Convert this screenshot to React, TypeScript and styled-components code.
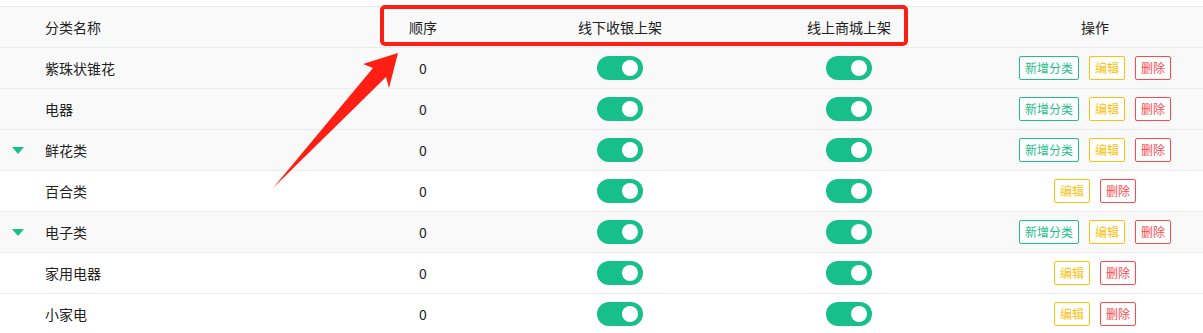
import styled, { createGlobalStyle } from "styled-components";

const GlobalStyle = createGlobalStyle`
  html, body {
    margin: 0;
    padding: 0;
    background: #fff;
  }
  body {
    font-family: "Noto Sans CJK SC", "Noto Sans", "Liberation Sans", sans-serif;
    font-size: 14px;
    color: #222;
  }
`;

const COLUMNS = "317px 212px 182px 276px 1fr";
const GREEN = "#17bf8b";

interface ICategory {
  id: number;
  name: string;
  sort: number;
  offline: boolean;
  online: boolean;
  level: 1 | 2;
  hasChildren?: boolean;
}

const categories: ICategory[] = [
  { id: 1, name: "紫珠状锥花", sort: 0, offline: true, online: true, level: 1 },
  { id: 2, name: "电器", sort: 0, offline: true, online: true, level: 1 },
  { id: 3, name: "鲜花类", sort: 0, offline: true, online: true, level: 1, hasChildren: true },
  { id: 4, name: "百合类", sort: 0, offline: true, online: true, level: 2 },
  { id: 5, name: "电子类", sort: 0, offline: true, online: true, level: 1, hasChildren: true },
  { id: 6, name: "家用电器", sort: 0, offline: true, online: true, level: 2 },
  { id: 7, name: "小家电", sort: 0, offline: true, online: true, level: 2 },
];

const Page = styled.div`
  position: relative;
  padding-top: 6px;
  height: 333px;
  overflow: hidden;
  box-sizing: border-box;
`;

const Table = styled.div`
  display: flex;
  flex-direction: column;
`;

const HeaderRow = styled.div`
  display: grid;
  grid-template-columns: ${COLUMNS};
  height: 40px;
  background: #f9f9f9;
  border-top: 1px solid #e9ebef;
  border-bottom: 1px solid #e9ebef;
`;

const Row = styled.div<{ $child?: boolean }>`
  display: grid;
  grid-template-columns: ${COLUMNS};
  height: 40px;
  background: ${(p) => (p.$child ? "#fff" : "#f9f9f9")};
  border-bottom: 1px solid #e9ebef;
`;

const Cell = styled.div<{ $left?: boolean }>`
  display: flex;
  align-items: center;
  justify-content: ${(p) => (p.$left ? "flex-start" : "center")};
  padding-left: ${(p) => (p.$left ? "12px" : "0")};
  gap: 10px;
  white-space: nowrap;
`;

const ExpandSlot = styled.span`
  display: inline-flex;
  align-items: center;
  width: 23px;
  height: 10px;
`;

const Caret = styled.span`
  width: 0;
  height: 0;
  border-left: 6.5px solid transparent;
  border-right: 6.5px solid transparent;
  border-top: 7px solid ${GREEN};
`;

const Switch = styled.span<{ $on: boolean }>`
  position: relative;
  display: inline-block;
  width: 46px;
  height: 24px;
  border-radius: 12px;
  background: ${(p) => (p.$on ? GREEN : "#dcdfe6")};
  &::after {
    content: "";
    position: absolute;
    top: 4px;
    ${(p) => (p.$on ? "right: 5px;" : "left: 5px;")}
    width: 16px;
    height: 16px;
    border-radius: 50%;
    background: #fff;
  }
`;

const ActionButton = styled.button<{ $color: string }>`
  height: 24px;
  padding: 0 5px;
  border: 1px solid ${(p) => p.$color};
  border-radius: 2px;
  background: #fff;
  color: ${(p) => p.$color};
  font-family: inherit;
  font-size: 12px;
  line-height: 22px;
  cursor: pointer;
`;

const Highlight = styled.div`
  position: absolute;
  left: 380px;
  top: 5px;
  width: 528px;
  height: 41px;
  box-sizing: border-box;
  border: 4px solid #fe1f14;
  border-radius: 5px;
  pointer-events: none;
`;

const ArrowLayer = styled.svg`
  position: absolute;
  left: 0;
  top: 0;
  pointer-events: none;
`;

const App = () => {
  return (
    <>
      <GlobalStyle />
      <Page>
        <Table>
          <HeaderRow>
            <Cell $left>
              <ExpandSlot />
              <span>分类名称</span>
            </Cell>
            <Cell>顺序</Cell>
            <Cell>线下收银上架</Cell>
            <Cell>线上商城上架</Cell>
            <Cell>操作</Cell>
          </HeaderRow>
          {categories.map((item) => (
            <Row key={item.id} $child={item.level === 2}>
              <Cell $left>
                <ExpandSlot>{item.hasChildren && <Caret />}</ExpandSlot>
                <span>{item.name}</span>
              </Cell>
              <Cell>{item.sort}</Cell>
              <Cell>
                <Switch $on={item.offline} />
              </Cell>
              <Cell>
                <Switch $on={item.online} />
              </Cell>
              <Cell>
                {item.level === 1 && <ActionButton $color="#1fbe8c">新增分类</ActionButton>}
                <ActionButton $color="#fcc10e">编辑</ActionButton>
                <ActionButton $color="#fd4a4f">删除</ActionButton>
              </Cell>
            </Row>
          ))}
        </Table>
        <Highlight />
        <ArrowLayer width="1203" height="333" viewBox="0 0 1203 333">
          <polygon
            points="273,188 373,68 363,64 398,53 389,88 386,77"
            fill="#fe1f14"
          />
        </ArrowLayer>
      </Page>
    </>
  );
};

export default App;
